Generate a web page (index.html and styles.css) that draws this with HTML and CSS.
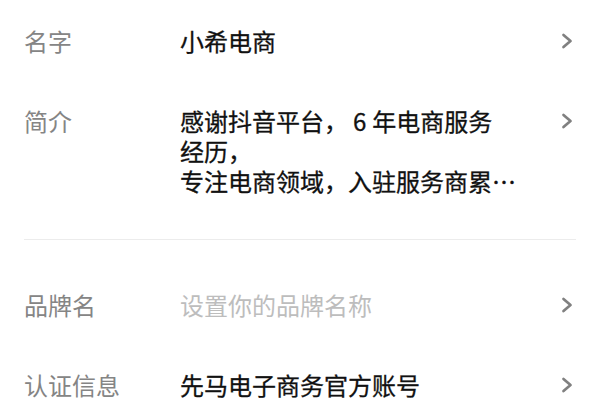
FILE: index.html
```html
<!DOCTYPE html>
<html lang="zh-CN">
<head>
<meta charset="utf-8">
<link rel="stylesheet" href="styles.css">
</head>
<body>
<div class="page">
  <section class="group group-top">
    <div class="row">
      <div class="label">名字</div>
      <div class="value">小希电商</div>
      <svg class="chev" viewBox="0 0 12 16"><path d="M2.5 2 L9.5 8 L2.5 14"/></svg>
    </div>
    <div class="row">
      <div class="label">简介</div>
      <div class="value">感谢抖音平台，<span class="num">6</span>年电商服务经历，<br>专注电商领域，入驻服务商累…</div>
      <svg class="chev" viewBox="0 0 12 16"><path d="M2.5 2 L9.5 8 L2.5 14"/></svg>
    </div>
  </section>
  <section class="group group-bottom">
    <div class="row">
      <div class="label">品牌名</div>
      <div class="value placeholder">设置你的品牌名称</div>
      <svg class="chev" viewBox="0 0 12 16"><path d="M2.5 2 L9.5 8 L2.5 14"/></svg>
    </div>
    <div class="row row-last">
      <div class="label">认证信息</div>
      <div class="value">先马电子商务官方账号</div>
      <svg class="chev" viewBox="0 0 12 16"><path d="M2.5 2 L9.5 8 L2.5 14"/></svg>
    </div>
  </section>
</div>
</body>
</html>
```

FILE: styles.css
```css
html, body {
  margin: 0;
  padding: 0;
  background: #ffffff;
}
body {
  font-family: "Noto Sans CJK SC", "Noto Sans", sans-serif;
  font-size: 24px;
  line-height: 30px;
  color: #161823;
}
.page {
  padding: 1px 24px 0 24px;
}
.group-top {
  padding-bottom: 18px;
  border-bottom: 1px solid #ececec;
}
.group-bottom {
  padding-top: 25px;
}
.row {
  display: flex;
  align-items: flex-start;
  padding: 25px 0;
}
.row-last {
  padding-bottom: 5px;
}
.label {
  width: 156px;
  flex: none;
  color: #858585;
}
.value {
  width: 336px;
  flex: none;
  font-weight: 400;
  color: #111111;
  -webkit-text-stroke: 0.3px #111111;
}
.placeholder {
  color: #bdbdbd;
  -webkit-text-stroke: 0;
}
.num {
  padding: 0 6px 0 5px;
}
.chev {
  margin-left: auto;
  width: 12px;
  height: 16px;
  margin-top: 7px;
  margin-right: 3px;
  fill: none;
  stroke: #808080;
  stroke-width: 2.7;
  stroke-linecap: round;
  stroke-linejoin: round;
}
```
